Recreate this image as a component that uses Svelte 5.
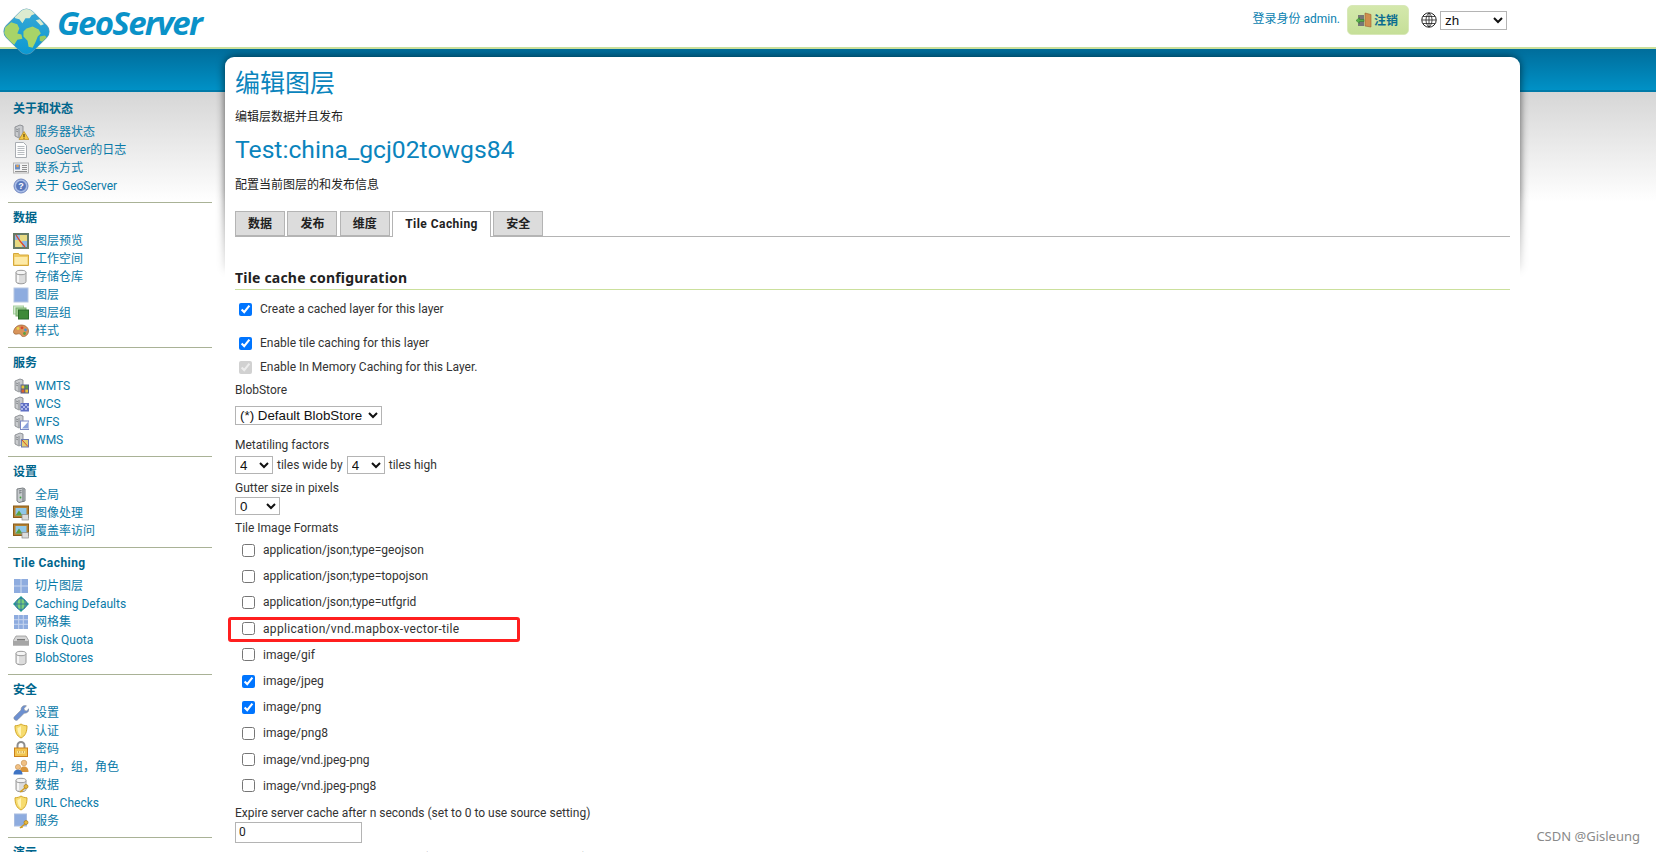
<script>
  const srv = '<path d="M2 3l5-2 3 1v10l-4 2-4-2z" fill="#c9cbce" stroke="#7d8186" stroke-width=".8"/><path d="M6 4v9" stroke="#8a8e93"/><path d="M3 5l2 .8M3 7l2 .8" stroke="#777b80" stroke-width=".8"/>';
  const db = '<path d="M3 3.500v9c0 1.400 2.200 2.300 5 2.300s5-.9 5-2.300v-9z" fill="#dcdcdc" stroke="#9a9a9a"/><ellipse cx="8" cy="3.500" rx="5" ry="2.200" fill="#f4f4f4" stroke="#9a9a9a"/><path d="M5 6v7" stroke="#fff" stroke-width="1.500"/>';
  const key = '<circle cx="13" cy="9.500" r="2" fill="#e8b93c" stroke="#a87a14" stroke-width=".7"/><path d="M12 11l-5 4M8.500 13.800l1 1" stroke="#d19c22" stroke-width="1.600"/>';
  const shield = '<path d="M8 1c1.500 1 3.500 1.700 6 1.800 0 6-1.500 10-6 12.200C3.500 12.800 2 8.800 2 2.800 4.500 2.700 6.500 2 8 1z" fill="#f7dc6f" stroke="#d3a82a"/><path d="M8 3v10c-2.500-1.800-3.500-4.400-3.600-8 1.400-.3 2.600-1 3.600-2z" fill="#fff3b5"/>';
  const pic = '<rect x=".5" y="1" width="15" height="11.500" fill="#b58032" stroke="#8a5c1a"/><rect x="2.500" y="3" width="11" height="7.500" fill="#8fc7e8"/><path d="M2.500 10.500l3.500-5 3.500 5z" fill="#5aa041"/><rect x="9" y="9.500" width="6.500" height="5.500" fill="#dcdcdc" stroke="#888" stroke-width=".7"/>';

  const icons = {
    status: srv + '<path d="M11 7.500l5 8H6z" fill="#f5c842" stroke="#b9891a" stroke-width=".7"/><path d="M11 10v3M11 13.700v.9" stroke="#3b2b00"/>',
    doc: '<path d="M2.500.5h8l3 3v12h-11z" fill="#fdfdfd" stroke="#a9adb2"/><path d="M4.500 4.500h7M4.500 6.500h7M4.500 8.500h7M4.500 10.500h7M4.500 12.500h7" stroke="#b8bcc0"/>',
    card: '<rect x=".5" y="3" width="15" height="10" fill="#f3f3f3" stroke="#b4b4b4"/><rect x="2" y="4.500" width="5" height="5" fill="#6c8fc4"/><circle cx="4.500" cy="6" r="1.300" fill="#e8a04a"/><path d="M9 5.500h5M9 7.500h5M9 9.500h5M2 11.500h12" stroke="#8f8f8f"/>',
    help: '<circle cx="8" cy="8" r="7" fill="#a9bde6" stroke="#6f86c0"/><circle cx="8" cy="8" r="5" fill="#5a78bc"/><text x="8" y="11.300" text-anchor="middle" font-family="Liberation Sans" font-size="9" font-weight="700" fill="#fff">?</text>',
    map: '<rect x="0" y="0" width="16" height="16" fill="#667a66"/><rect x="2" y="2" width="12" height="12" fill="#e8da82"/><path d="M2 2h5v5H2zM9 8h5v6H9z" fill="#8fb8e6"/><path d="M3 2l4 6 5 6" stroke="#d9482e" stroke-width="1.300" fill="none"/>',
    folder: '<path d="M.5 2.500h5l1 1.500h9v10.500H.5z" fill="#f1cb62" stroke="#d5a83a"/><rect x="1.500" y="6" width="13" height="7.500" fill="#fdeaa8"/>',
    db,
    layer: '<rect x="1" y="1" width="14" height="14" fill="#8eacdf" stroke="#b6c6e2"/>',
    layers: '<rect x=".5" y="1" width="10" height="8" fill="#d5ebd0" stroke="#a8d0a0"/><rect x="3" y="3" width="10" height="8" fill="#a3d096" stroke="#78ad6c"/><rect x="5.500" y="5" width="10" height="9" fill="#3f8a38" stroke="#2b6a2a"/>',
    palette: '<path d="M8 2c4.500 0 7.500 2.700 7.500 6 0 3.500-3 6-6 5.500-1.500-.2-1-2-2.500-2.500-2-.6-3 .6-5 0C.5 10.500 0 9 1 7c1-2.700 3.500-5 7-5z" fill="#d8945a" stroke="#9a6030" stroke-width=".7"/><circle cx="5" cy="5.500" r="1.400" fill="#e8d44a"/><circle cx="9" cy="4.800" r="1.400" fill="#d9482e"/><circle cx="12.500" cy="7" r="1.400" fill="#4f8fd0"/><circle cx="11.500" cy="10.500" r="1.400" fill="#5aa041"/>',
    wmts: srv + '<rect x="7.500" y="6.500" width="8.500" height="9" fill="#56608a"/><path d="M8.500 7.500H11.300V10.500H8.500z" fill="#e8c63a"/><path d="M12.300 7.500H15V10.500h-2.700z" fill="#5aa041"/><path d="M8.500 11.500H11.300v3H8.500z" fill="#d9602e"/><path d="M12.300 11.500H15v3h-2.700z" fill="#e8c63a"/>',
    wcs: srv + '<rect x="7.500" y="7" width="8.500" height="8.500" fill="#5f6fc4"/><path d="M8 8h2v2H8zM12 8h2v2h-2zM10 10h2v2h-2zM14 10h2v2h-2zM8 12h2v2H8zM12 12h2v2h-2z" fill="#aab5e8"/>',
    wfs: srv + '<rect x="7.500" y="7" width="8.500" height="8.500" fill="#fff" stroke="#7a88c4"/><path d="M15 8v6.500H9z" fill="#8aa2dc"/>',
    wms: srv + '<rect x="8" y="7" width="8" height="8.500" fill="#6a78b0"/><rect x="9" y="8" width="6" height="6.500" fill="#e2cf6e"/><path d="M9 8l6 6.500" stroke="#d9482e"/>',
    global: '<path d="M4 2l6-1 2 1v12l-6 1.500L4 14z" fill="#c6cacd" stroke="#777c80"/><path d="M10 2v13" stroke="#6d7276"/><path d="M6 4l2.500-.4M6 6l2.500-.4" stroke="#6d7276"/><circle cx="7.500" cy="10.500" r=".9" fill="#3ca43c"/>',
    image: pic,
    grid2: '<rect x="1" y="1" width="14" height="14" fill="#8eacdf"/><path d="M8 1v14M1 8h14" stroke="#c7d6ef" stroke-width="1.200"/>',
    globe: '<path d="M8 0l8 8-8 8-8-8z" fill="#1f9a8f"/><circle cx="8" cy="8" r="5.500" fill="#7bd07a" stroke="#3c7fb0"/><path d="M8 2.500v11M2.500 8h11M5 3.500c-1.500 3-1.500 6 0 9M11 3.500c1.500 3 1.500 6 0 9" stroke="#2b6e9e" stroke-width=".8" fill="none"/>',
    grid3: '<rect x="1" y="1" width="14" height="14" fill="#8eacdf"/><path d="M5.700 1v14M10.300 1v14M1 5.700h14M1 10.300h14" stroke="#c7d6ef"/>',
    disk: '<path d="M3 4h10l3 5v4H0V9z" fill="#d4d4d4" stroke="#8e8e8e" stroke-width=".7"/><rect x="0" y="9" width="16" height="4.500" fill="#a6a6a6"/><rect x="4" y="7" width="8" height="1.500" fill="#777"/>',
    wrench: '<path d="M2 15c-1.500-1-1.500-2.500-.5-3.500L8 5c-.3-2.500 1.500-4.500 4-4.500.7 0 1 .1 1.500.3L11 3.500l.7 2 2 .5L16 3.500c.4 2.800-1.800 5-4.800 4.800L5 14.500C4 15.500 3 15.700 2 15z" fill="#6d90d0" stroke="#8c8c8c" stroke-width=".5"/>',
    shield,
    lock: '<path d="M4.500 7V4.500a3.500 3.500 0 017 0V7" fill="none" stroke="#8d8d8d" stroke-width="2"/><rect x="1.500" y="7" width="13" height="8.500" fill="#f2c44f" stroke="#c9801c"/><path d="M4 10h8v2.500H4z" fill="#fbe79a"/><path d="M5 11h1M7.500 11h1M10 11h1" stroke="#a66c10"/>',
    users: '<circle cx="11" cy="4" r="2.800" fill="#f0c084" stroke="#b9823e" stroke-width=".5"/><path d="M7 13c0-4 1.500-5.500 4-5.500s4.500 1.500 4.500 5.500z" fill="#d9963c"/><circle cx="5" cy="8" r="2.600" fill="#f0c084" stroke="#b9823e" stroke-width=".5"/><path d="M.5 15.500c0-3.500 2-4.800 4.500-4.800s4.500 1.300 4.500 4.800z" fill="#3f74c4"/>',
    dbkey: db + key,
    layerkey: '<rect x="1.500" y="1" width="12" height="12" fill="#8eacdf" stroke="#a8bce0"/>' + key
  };

  const nav = [
    { title: '关于和状态', items: [['status', '服务器状态'], ['doc', 'GeoServer的日志'], ['card', '联系方式'], ['help', '关于 GeoServer']] },
    { title: '数据', items: [['map', '图层预览'], ['folder', '工作空间'], ['db', '存储仓库'], ['layer', '图层'], ['layers', '图层组'], ['palette', '样式']] },
    { title: '服务', items: [['wmts', 'WMTS'], ['wcs', 'WCS'], ['wfs', 'WFS'], ['wms', 'WMS']] },
    { title: '设置', items: [['global', '全局'], ['image', '图像处理'], ['image', '覆盖率访问']] },
    { title: 'Tile Caching', items: [['grid2', '切片图层'], ['globe', 'Caching Defaults'], ['grid3', '网格集'], ['disk', 'Disk Quota'], ['db', 'BlobStores']] },
    { title: '安全', items: [['wrench', '设置'], ['shield', '认证'], ['lock', '密码'], ['users', '用户，组，角色'], ['dbkey', '数据'], ['shield', 'URL Checks'], ['layerkey', '服务']] },
    { title: '演示', items: [] }
  ];

  const tabs = ['数据', '发布', '维度', 'Tile Caching', '安全'];

  const formats = [
    ['application/json;type=geojson', false],
    ['application/json;type=topojson', false],
    ['application/json;type=utfgrid', false],
    ['application/vnd.mapbox-vector-tile', false, true],
    ['image/gif', false],
    ['image/jpeg', true],
    ['image/png', true],
    ['image/png8', false],
    ['image/vnd.jpeg-png', false],
    ['image/vnd.jpeg-png8', false]
  ];
</script>

<div class="page">
  <header class="top">
    <svg class="logo" viewBox="0 0 48 48" aria-hidden="true">
      <defs>
        <clipPath id="diamond"><rect x="6" y="6" width="36" height="36" rx="8" transform="rotate(45 24 24)" /></clipPath>
        <linearGradient id="sea" x1="0" y1="0" x2="0" y2="1">
          <stop offset="0" stop-color="#3aa9d6" />
          <stop offset="1" stop-color="#0a98d2" />
        </linearGradient>
      </defs>
      <rect x="5.500" y="5.500" width="37" height="37" rx="8.500" transform="rotate(45 24 24)" fill="#6f9fb5" />
      <g clip-path="url(#diamond)">
        <rect width="48" height="48" fill="url(#sea)" />
        <path d="M11 6l9-5 11 1 3 4-5 2-2 3-4 0-3 5-3-4-4-1z" fill="#dcebd0" />
        <path d="M3 20l6-5 6 2 2 4-2 5 4 1 1 4-5 1-3 5-5-3-5-8z" fill="#a8d468" />
        <path d="M24 21l6-2 6 3 2 4-3 3-2 5-3 6-4-1-1-6-4-4 0-5z" fill="#a8d468" />
        <path d="M37 29l5-1 3 3-3 4-5-2z" fill="#9acb62" />
        <path d="M33 13l4-1 4 5-3 1z" fill="#d8ead0" />
      </g>
    </svg>
    <span class="brand">GeoServer</span>
    <div class="user">
      <span class="who">登录身份 admin.</span>
      <button class="logout">
        <svg viewBox="0 0 16 16" aria-hidden="true">
          <rect x="2" y="3" width="6" height="11" fill="#777" />
          <path d="M9 1l6 1.500v12.500l-6-1z" fill="#cf8f4e" stroke="#9a6030" stroke-width=".6" />
          <path d="M0 8.500l3.500-3v2H8v2H3.500v2z" fill="#58b04a" stroke="#2f7a2a" stroke-width=".5" />
        </svg>
        注销
      </button>
      <svg class="world" viewBox="0 0 16 16" aria-hidden="true">
        <circle cx="8" cy="8" r="7.200" fill="#fff" stroke="#222" />
        <path d="M8 1v14M1 8h14M2 4.500h12M2 11.500h12M8 1C4 4 4 12 8 15M8 1c4 3 4 11 0 14" stroke="#222" stroke-width=".8" fill="none" />
      </svg>
      <select class="lang"><option>zh</option></select>
    </div>
  </header>
  <div class="band"></div>

  <div class="body">
    <nav class="side">
      {#each nav as sec, i}
        <section class="sec" class:first={i === 0}>
          <h3 class:wide={sec.title === 'Tile Caching'}>{sec.title}</h3>
          {#each sec.items as [icon, label]}
            <a class="item" href="#top">
              <svg viewBox="0 0 16 16" aria-hidden="true">{@html icons[icon]}</svg>
              {label}
            </a>
          {/each}
        </section>
      {/each}
    </nav>

    <div class="main">
      <div class="shadow"></div>
      <main class="panel">
        <h1>编辑图层</h1>
        <p class="sub">编辑层数据并且发布</p>
        <h2>Test:china_gcj02towgs84</h2>
        <p class="sub2">配置当前图层的和发布信息</p>

        <div class="tabs">
          {#each tabs as t}
            <span class="tab" class:active={t === 'Tile Caching'}>{t}</span>
          {/each}
        </div>

        <h4>Tile cache configuration</h4>

        <label class="check c1"><input type="checkbox" checked /> Create a cached layer for this layer</label>
        <label class="check c2"><input type="checkbox" checked /> Enable tile caching for this layer</label>
        <label class="check c3"><input type="checkbox" checked disabled /> Enable In Memory Caching for this Layer.</label>

        <div class="lbl blob-l">BlobStore</div>
        <select class="blob"><option>(*) Default BlobStore</option></select>

        <div class="lbl meta-l">Metatiling factors</div>
        <div class="meta">
          <select class="num"><option>4</option></select>
          tiles wide by
          <select class="num"><option>4</option></select>
          tiles high
        </div>

        <div class="lbl gut-l">Gutter size in pixels</div>
        <select class="num gut"><option>0</option></select>

        <div class="lbl fmt-l">Tile Image Formats</div>
        <ul class="formats">
          {#each formats as [name, on, marked]}
            <li class:marked>
              <input type="checkbox" checked={on} />
              <span>{name}</span>
            </li>
          {/each}
        </ul>

        <div class="lbl exp-l">Expire server cache after n seconds (set to 0 to use source setting)</div>
        <input class="txt" value="0" />
        <div class="lbl exp2-l">Expire client cache after n seconds (set to 0 to use source setting)</div>
      </main>
    </div>
  </div>

  <span class="mark">CSDN @Gisleung</span>
</div>

<style>
  :global(body) {
    margin: 0;
    background: #fff;
  }

  .page {
    position: relative;
    height: 852px;
    overflow: hidden;
    font: 12px/18px Roboto, "Noto Sans CJK SC", sans-serif;
    color: #333;
    background: linear-gradient(#d6d6d6, #fff) 0 92px / 100% 110px no-repeat #fff;
  }

  /* header */
  .top {
    position: relative;
    z-index: 3;
    height: 47px;
    display: flex;
    align-items: center;
    background: #fff;
    border-bottom: 2px solid #cbe09c;
  }

  .logo {
    position: absolute;
    left: 2px;
    top: 7px;
    width: 49px;
    height: 49px;
  }

  .brand {
    margin: 0 0 2px 57px;
    font: italic 700 33px/40px "Open Sans", sans-serif;
    letter-spacing: -1.700px;
    color: #0a92c8;
  }

  .user {
    margin-left: auto;
    margin-right: 149px;
    display: flex;
    align-items: center;
    margin-top: -7px;
  }

  .who {
    color: #0a7fb0;
    margin-right: 7px;
    margin-top: -3px;
  }

  .logout {
    display: flex;
    align-items: center;
    gap: 2px;
    width: 62px;
    height: 30px;
    padding: 0 0 0 8px;
    border: 1px solid #d8e8b8;
    border-radius: 5px;
    background: linear-gradient(#d4e8ac, #c6df98);
    color: #0a6c90;
    font: 700 12px/18px "Noto Sans CJK SC", sans-serif;
  }

  .logout svg {
    width: 16px;
    height: 16px;
  }

  .world {
    width: 16px;
    height: 16px;
    margin: 0 3px 0 12px;
  }

  select {
    font: 13.33px "Liberation Sans", sans-serif;
    color: #111;
    background: #fff;
    border: 1px solid #b4b4b4;
    border-radius: 0;
    height: 19px;
    padding: 0;
  }

  .lang {
    width: 67px;
  }

  .band {
    height: 41px;
    background: linear-gradient(#006d9b, #0091c6);
    border-bottom: 2px solid #007aa8;
  }

  /* layout */
  .body {
    display: flex;
    margin-top: -35px;
  }

  .side {
    flex: 0 0 225px;
    box-sizing: border-box;
    padding: 36px 13px 0 8px;
  }

  .sec {
    border-top: 1px solid #a9b296;
    padding: 6px 0 7px;
  }

  .sec.first {
    border-top-color: transparent;
  }

  h3 {
    margin: 0 0 5px 5px;
    font-size: 12px;
    line-height: 18px;
    font-weight: 700;
    color: #00658c;
  }

  h3.wide {
    letter-spacing: 0.45px;
  }

  .item {
    display: flex;
    align-items: center;
    height: 18px;
    padding-left: 5px;
    color: #0a7aa8;
    text-decoration: none;
  }

  .item svg {
    flex: none;
    width: 16px;
    height: 16px;
    margin-right: 6px;
  }

  .main {
    position: relative;
    flex: 0 0 1295px;
  }

  .shadow {
    position: absolute;
    top: -16px;
    left: -16px;
    right: -16px;
    height: 246px;
    -webkit-mask-image: linear-gradient(#000 60%, transparent);
    mask-image: linear-gradient(#000 60%, transparent);
  }

  .shadow::before {
    content: '';
    position: absolute;
    inset: 16px;
    border-radius: 10px 10px 0 0;
    box-shadow: 0 0 9px rgba(0, 0, 0, 0.65);
  }

  .panel {
    position: relative;
    background: #fff;
    border-radius: 9px 9px 0 0;
    padding: 12px 10px 0;
  }

  h1 {
    margin: 0;
    font-size: 25px;
    line-height: 30px;
    font-weight: 400;
    color: #0a84bd;
  }

  .sub {
    margin: 9px 0 0;
    color: #222;
  }

  h2 {
    margin: 9px 0 0;
    font-size: 24.700px;
    line-height: 30px;
    font-weight: 400;
    color: #0a84bd;
  }

  .sub2 {
    margin: 11px 0 0;
    color: #222;
  }

  .tabs {
    margin-top: 17px;
    display: flex;
    gap: 2.400px;
    border-bottom: 1px solid #b4b4b4;
    height: 25px;
  }

  .tab {
    box-sizing: border-box;
    height: 25px;
    padding: 0 12px;
    border: 1px solid #b4b4b4;
    background: #dcdcdc;
    font-weight: 700;
    line-height: 24px;
    color: #222;
  }

  .tab.active {
    height: 26px;
    background: #fff;
    border-bottom: 0;
    letter-spacing: 0.45px;
  }

  h4 {
    margin: 31px 0 0;
    padding-bottom: 1px;
    font: 700 14px/20px "Noto Sans", sans-serif;
    letter-spacing: 0.2px;
    color: #222;
    border-bottom: 1px solid #cbe09c;
  }

  input[type='checkbox'] {
    margin: 0;
    width: 13px;
    height: 13px;
    flex: none;
  }

  .check {
    display: flex;
    align-items: center;
    gap: 8px;
    padding-left: 4px;
    height: 18px;
  }

  .c1 { margin-top: 10px; }
  .c2 { margin-top: 16px; }
  .c3 { margin-top: 6px; }

  .lbl {
    height: 18px;
    line-height: 20px;
  }

  .blob-l { margin-top: 4px; }

  .blob {
    display: block;
    margin-top: 8px;
    width: 147px;
  }

  .meta-l { margin-top: 10px; }

  .meta {
    display: flex;
    align-items: center;
    gap: 4px;
    margin-top: 3px;
    height: 18px;
  }

  .num {
    width: 38px;
    height: 18px;
    padding-left: 0;
  }

  .gut-l { margin-top: 4px; }

  .gut {
    display: block;
    width: 45px;
    margin-top: 1px;
  }

  .fmt-l { margin-top: 3px; }

  .formats {
    list-style: none;
    margin: 1px 0 0;
    padding: 0;
  }

  .formats li {
    position: relative;
    display: flex;
    align-items: center;
    gap: 8px;
    height: 26.200px;
    padding-left: 7px;
  }

  .formats li.marked span {
    letter-spacing: 0.33px;
  }

  .formats li.marked::after {
    content: '';
    position: absolute;
    left: -7px;
    top: 1px;
    width: 292px;
    height: 25px;
    box-sizing: border-box;
    border: 3px solid #ff1f1f;
    border-radius: 3px;
  }

  .exp-l { margin-top: 4px; }

  .txt {
    display: block;
    box-sizing: border-box;
    width: 127px;
    height: 21px;
    margin-top: 1px;
    padding: 0 3px;
    border: 1px solid #b4b4b4;
    font: 12px Roboto, sans-serif;
    color: #222;
  }

  .exp2-l { margin-top: 5px; }

  .mark {
    position: absolute;
    right: 16px;
    bottom: 7px;
    font: 13px/18px "Noto Sans", sans-serif;
    color: #8a8a8a;
    background: rgba(255, 255, 255, 0.6);
  }
</style>
